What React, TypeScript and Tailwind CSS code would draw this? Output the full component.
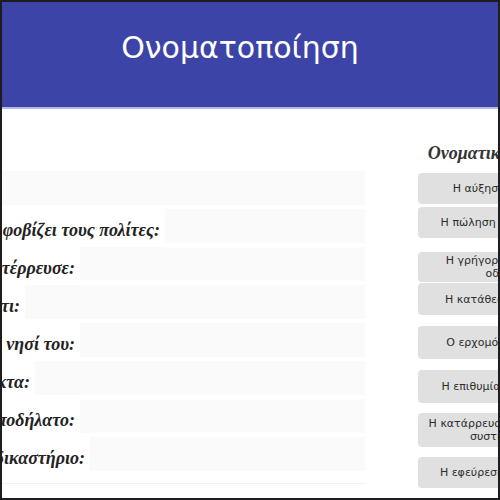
import React from "react";

const serif = { fontFamily: '"Liberation Serif", "DejaVu Serif", serif' };
const sans = { fontFamily: '"DejaVu Sans", "Liberation Sans", sans-serif' };

type Row = { label: string; box: string };

const rows: Row[] = [
  { label: "Η τιμή του πετρελαίου αυξήθηκε πολύ:", box: "w-[363px]" },
  { label: "Πουλάνε ναρκωτικά και αυτό φοβίζει τους πολίτες:", box: "w-[200px]" },
  { label: "Το παλιό σύστημα κατέρρευσε:", box: "w-[285px]" },
  { label: "Ο μάρτυρας κατέθεσε ότι:", box: "w-[340px]" },
  { label: "Ο Οδυσσέας ήρθε στο νησί του:", box: "w-[285px]" },
  { label: "Θέλει να ταξιδεύει τη νύκτα:", box: "w-[330px]" },
  { label: "Κάποιος εφηύρε το ποδήλατο:", box: "w-[285px]" },
  { label: "Κατέθεσε στο δικαστήριο:", box: "w-[275px]" },
];

type Btn = { lines: string[]; cls: string };

const buttons: Btn[] = [
  { lines: ["Η αύξηση κόστους"], cls: "h-[31px]" },
  { lines: ["Η πώληση ναρκωτικών"], cls: "h-[31px] mt-[3px]" },
  { lines: ["Η γρήγορη ανάπτυξη", "οδικού"], cls: "h-[30px] mt-[14px]" },
  { lines: ["Η κατάθεση μάρτυρα"], cls: "h-[32px] mt-[1px]" },
  { lines: ["Ο ερχομός του ήρωα"], cls: "h-[33px] mt-[11px]" },
  { lines: ["Η επιθυμία για ταξίδια"], cls: "h-[33px] mt-[11px]" },
  { lines: ["Η κατάρρευση του παλαιού", "συστήματος"], cls: "h-[34px] mt-[10px]" },
  { lines: ["Η εφεύρεση ποδηλάτου"], cls: "h-[31px] mt-[10px]" },
];

export default function App() {
  return (
    <div className="w-[500px] h-[500px] border-2 border-[#1d1d1f] bg-white overflow-hidden flex flex-col">
      <header className="h-[107px] shrink-0 bg-[#3c44a8] border-b-2 border-[#b3b7e8] flex items-center justify-center pr-[20px] pb-[14px]">
        <h1 className="text-white text-[30px] leading-none" style={sans}>
          Ονοματοποίηση
        </h1>
      </header>

      <div className="flex items-start">
        {/* sentences with their answer slots */}
        <div className="w-[363px] shrink-0 overflow-hidden pt-[62px]">
          {rows.map((r, i) => (
            <div key={i} className="h-[34px] mb-[4px] flex items-center justify-end">
              <span
                className="shrink-0 whitespace-nowrap font-bold italic text-[18px] leading-none text-[#222] pr-[5px] pt-[7px]"
                style={serif}
              >
                {r.label}
              </span>
              <div className={`${r.box} shrink-0 h-full bg-[#fafafa]`} />
            </div>
          ))}
          <div className="mt-[12px] h-px bg-[#f2f2f2]" />
        </div>

        <div className="ml-[53px] pt-[34px] shrink-0 w-[172px]">
          <div
            className="h-[20px] mb-[10px] flex items-center justify-center whitespace-nowrap font-bold italic text-[18px] text-[#333]"
            style={serif}
          >
            Ονοματικές φράσεις
          </div>
          {buttons.map((b, i) => (
            <div
              key={i}
              className={`${b.cls} w-[172px] rounded-[4px] bg-[#e0e0e0] flex flex-col items-center justify-center text-[11px] leading-[13px] text-[#2c2c2c] whitespace-nowrap`}
              style={sans}
            >
              {b.lines.map((l, j) => (
                <span key={j}>{l}</span>
              ))}
            </div>
          ))}
        </div>
      </div>
    </div>
  );
}
